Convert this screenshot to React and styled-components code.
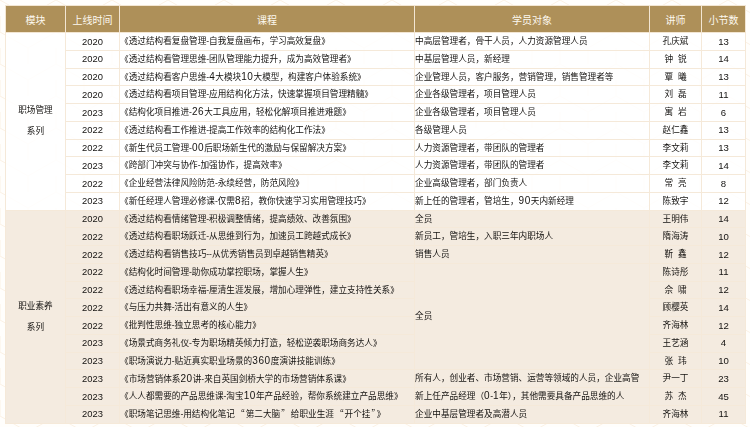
import React from 'react'
import styled, { createGlobalStyle } from 'styled-components'

const GlobalStyle = createGlobalStyle`
html, body {
  margin: 0;
  padding: 0;
  background: #fffefc;
}
`

const Page = styled.div`
position: relative;
width: 750px;
height: 427px;
padding: 5px 5px 0 5px;
box-sizing: border-box;
overflow: hidden;
font-family: "Liberation Sans", "Noto Sans CJK SC", sans-serif;
`

const Backdrop = styled.svg`
position: absolute;
left: 0;
top: 0;
width: 750px;
height: 427px;
`

const Table = styled.table`
position: relative;
width: 740px;
table-layout: fixed;
border-collapse: collapse;
font-size: 8.65px;
color: #141210;
filter: blur(0.3px);
`

const HeadCell = styled.th`
height: 26px;
padding: 0;
background: #ae9059;
color: #fdf9f0;
font-size: 10px;
font-weight: 400;
text-align: center;
border: 1px solid #f3e6d3;
`

const Row = styled.tr`
height: 17.76px;
background: ${p => (p.$alt ? '#f4ebe0' : 'rgba(255, 255, 255, 0.85)')};
`

const Cell = styled.td`
padding: 0;
text-align: ${p => (p.$left ? 'left' : 'center')};
white-space: nowrap;
overflow: hidden;
border: 1px solid #f5e9d9;
line-height: 1;
`

const YearCell = styled(Cell)`
font-size: 9.4px;
`

const NumCell = styled(Cell)`
font-size: 9.6px;
`

const TeacherCell = styled(Cell)`
white-space: pre;
`

const GroupCell = styled(Cell)`
line-height: 21px;
white-space: normal;
`

const Quote = styled.span`
font-family: "Noto Sans CJK SC", sans-serif;
margin: 0 1px;
`

const Digits = styled.span`
font-size: 10px;
letter-spacing: 0.6px;
`

const columns = [
  ['模块', 60],
  ['上线时间', 54],
  ['课程', 295],
  ['学员对象', 235],
  ['讲师', 52],
  ['小节数', 44],
]

const group1 = [
  ['2020', '《透过结构看复盘管理-自我复盘画布，学习高效复盘》', '中高层管理者，骨干人员，人力资源管理人员', '孔庆斌', 13],
  ['2020', '《透过结构看管理思维-团队管理能力提升，成为高效管理者》', '中基层管理人员，新经理', '钟  锐', 14],
  ['2020', '《透过结构看客户思维-4大模块10大模型，构建客户体验系统》', '企业管理人员，客户服务，营销管理，销售管理者等', '覃  曦', 13],
  ['2020', '《透过结构看项目管理-应用结构化方法，快速掌握项目管理精髓》', '企业各级管理者，项目管理人员', '刘  磊', 11],
  ['2023', '《结构化项目推进-26大工具应用，轻松化解项目推进难题》', '企业各级管理者，项目管理人员', '寓  岩', 6],
  ['2022', '《透过结构看工作推进-提高工作效率的结构化工作法》', '各级管理人员', '赵仁鑫', 13],
  ['2022', '《新生代员工管理-00后职场新生代的激励与保留解决方案》', '人力资源管理者，带团队的管理者', '李文莉', 13],
  ['2023', '《跨部门冲突与协作-加强协作，提高效率》', '人力资源管理者，带团队的管理者', '李文莉', 14],
  ['2022', '《企业经营法律风险防范-永续经营，防范风险》', '企业高级管理者，部门负责人', '常  亮', 8],
  ['2023', '《新任经理人管理必修课-仅需8招，教你快速学习实用管理技巧》', '新上任的管理者，管培生，90天内新经理', '陈致宇', 12],
]

const group2 = [
  ['2020', '《透过结构看情绪管理-积极调整情绪，提高绩效、改善氛围》', '全员', '王明伟', 14],
  ['2022', '《透过结构看职场跃迁-从思维到行为，加速员工跨越式成长》', '新员工，管培生，入职三年内职场人', '隋海涛', 10],
  ['2022', '《透过结构看销售技巧--从优秀销售员到卓越销售精英》', '销售人员', '靳  鑫', 12],
  ['2022', '《结构化时间管理-助你成功掌控职场，掌握人生》', null, '陈诗彤', 11],
  ['2022', '《透过结构看职场幸福-厘清生涯发展，增加心理弹性，建立支持性关系》', null, '佘  啸', 12],
  ['2022', '《与压力共舞-活出有意义的人生》', null, '顾樱英', 14],
  ['2022', '《批判性思维-独立思考的核心能力》', null, '齐海林', 12],
  ['2023', '《场景式商务礼仪-专为职场精英倾力打造，轻松逆袭职场商务达人》', null, '王艺涵', 4],
  ['2023', '《职场演说力-贴近真实职业场景的360度演讲技能训练》', null, '张  玮', 10],
  ['2023', '《市场营销体系20讲-来自英国剑桥大学的市场营销体系课》', '所有人，创业者、市场营销、运营等领域的人员，企业高管', '尹一丁', 23],
  ['2023', '《人人都需要的产品思维课-淘宝10年产品经验，帮你系统建立产品思维》', '新上任产品经理（0-1年），其他需要具备产品思维的人', '苏  杰', 45],
  ['2023', '《职场笔记思维-用结构化笔记“第二大脑”给职业生涯“开个挂”》', '企业中基层管理者及高潜人员', '齐海林', 11],
]

// digits and curly quotes run wider than the text around them
const rich = text =>
  text.split(/([“”]|\d+)/).map((part, i) => {
    if (i % 2 === 0) return part
    return /\d/.test(part) ? <Digits key={i}>{part}</Digits> : <Quote key={i}>{part}</Quote>
  })

const Lines = ({ rows, alt, first, second }) =>
  rows.map((r, i) => (
    <Row key={i} $alt={alt}>
      {i === 0 && (
        <GroupCell rowSpan={rows.length}>
          {first}
          <br />
          {second}
        </GroupCell>
      )}
      <YearCell>{r[0]}</YearCell>
      <Cell $left>{rich(r[1])}</Cell>
      {r[2] !== null ? (
        <Cell $left>{rich(r[2])}</Cell>
      ) : (
        i === 3 && <Cell $left rowSpan={6}>全员</Cell>
      )}
      <TeacherCell>{r[3]}</TeacherCell>
      <NumCell>{r[4]}</NumCell>
    </Row>
  ))

export default function App() {
  return (
    <Page>
      <GlobalStyle />
      <Backdrop aria-hidden="true">
        <defs>
          <pattern id="hex" width="56" height="32" patternUnits="userSpaceOnUse">
            <path d="M0 0 L28 16 L56 0 M28 16 V32 M0 32 V16 M56 32 V16" fill="none" stroke="#fbf1e4" strokeWidth="1" />
          </pattern>
        </defs>
        <rect width="750" height="427" fill="url(#hex)" />
      </Backdrop>
      <Table>
        <colgroup>
          {columns.map(c => (
            <col key={c[0]} width={c[1]} />
          ))}
        </colgroup>
        <thead>
          <tr>
            {columns.map(c => (
              <HeadCell key={c[0]}>{c[0]}</HeadCell>
            ))}
          </tr>
        </thead>
        <tbody>
          <Lines rows={group1} first="职场管理" second="系列" />
          <Lines rows={group2} alt first="职业素养" second="系列" />
        </tbody>
      </Table>
    </Page>
  )
}
